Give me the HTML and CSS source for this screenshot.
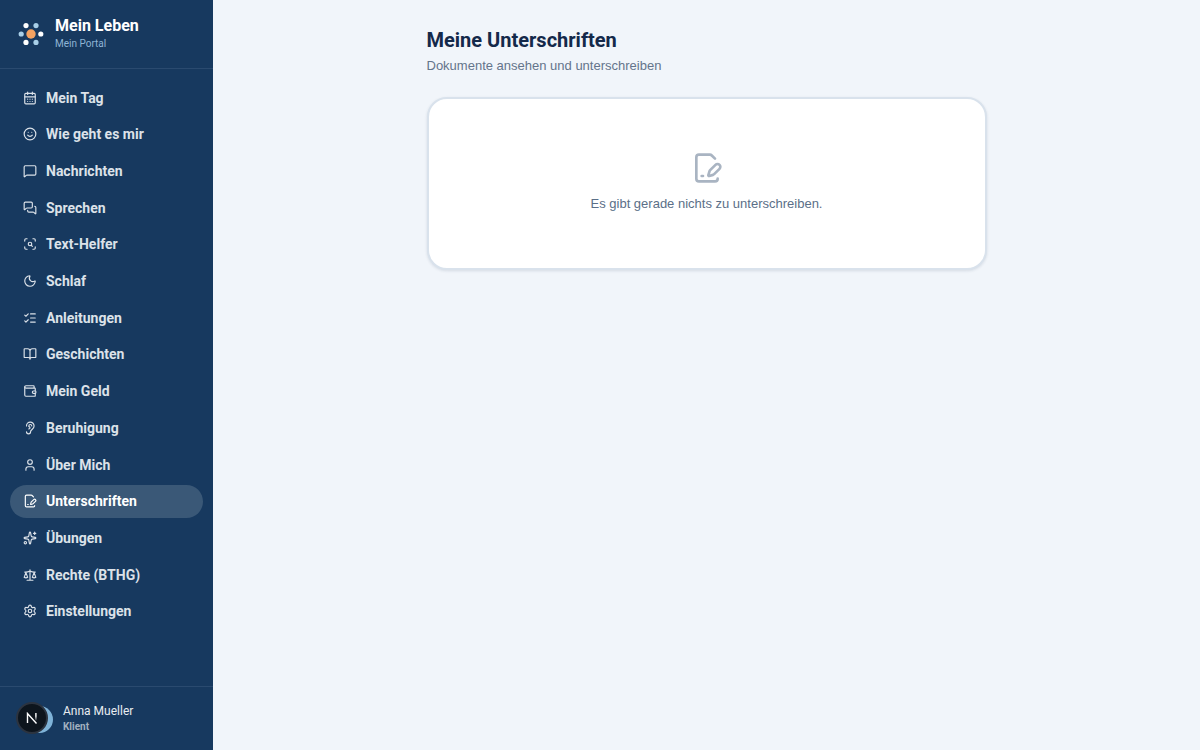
FILE: index.html
```html
<!DOCTYPE html>
<html lang="de">
<head>
<meta charset="utf-8">
<meta name="viewport" content="width=device-width, initial-scale=1">
<title>Meine Unterschriften</title>
<link rel="stylesheet" href="styles.css">
</head>
<body>
<div class="app">
  <aside class="sidebar">
    <header class="brand">
      <svg class="brand-logo" viewBox="0 0 26 26" aria-hidden="true">
        <circle cx="13" cy="13" r="4.7" fill="#f4a261"/>
        <g fill="#ffffff"><circle cx="8" cy="4.6" r="2.6"/><circle cx="22.8" cy="13" r="2.6"/><circle cx="8" cy="21.4" r="2.6"/></g>
        <g fill="#a8cfe8"><circle cx="18" cy="4.6" r="2.6"/><circle cx="3.2" cy="13" r="2.6"/><circle cx="18" cy="21.4" r="2.6"/></g>
      </svg>
      <div>
        <div class="brand-name">Mein Leben</div>
        <div class="brand-sub">Mein Portal</div>
      </div>
    </header>
    <nav class="nav" aria-label="Hauptmenü">
      <a class="nav-link" href="#"><svg class="icon" viewBox="0 0 24 24"><path d="M8 2v4M16 2v4M3 10h18M8 14h.01M12 14h.01M16 14h.01M8 18h.01M12 18h.01M16 18h.01"/><rect x="3" y="4" width="18" height="18" rx="2"/></svg>Mein Tag</a>
      <a class="nav-link" href="#"><svg class="icon" viewBox="0 0 24 24"><circle cx="12" cy="12" r="10"/><path d="M8 14s1.5 2 4 2 4-2 4-2M9 9h.01M15 9h.01"/></svg>Wie geht es mir</a>
      <a class="nav-link" href="#"><svg class="icon" viewBox="0 0 24 24"><path d="M22 17a2 2 0 0 1-2 2H6.828a2 2 0 0 0-1.414.586l-2.202 2.202A.71.71 0 0 1 2 21.286V5a2 2 0 0 1 2-2h16a2 2 0 0 1 2 2z"/></svg>Nachrichten</a>
      <a class="nav-link" href="#"><svg class="icon" viewBox="0 0 24 24"><path d="M16 10a2 2 0 0 1-2 2H6.828a2 2 0 0 0-1.414.586l-2.202 2.202A.71.71 0 0 1 2 14.286V4a2 2 0 0 1 2-2h10a2 2 0 0 1 2 2z"/><path d="M20 9a2 2 0 0 1 2 2v10.286a.71.71 0 0 1-1.212.502l-2.202-2.202A2 2 0 0 0 17.172 19H10a2 2 0 0 1-2-2v-1"/></svg>Sprechen</a>
      <a class="nav-link" href="#"><svg class="icon" viewBox="0 0 24 24"><path d="M3 7V5a2 2 0 0 1 2-2h2M17 3h2a2 2 0 0 1 2 2v2M21 17v2a2 2 0 0 1-2 2h-2M7 21H5a2 2 0 0 1-2-2v-2M16 16l-1.9-1.9"/><circle cx="12" cy="12" r="3"/></svg>Text-Helfer</a>
      <a class="nav-link" href="#"><svg class="icon" viewBox="0 0 24 24"><path d="M20.985 12.486a9 9 0 1 1-9.473-9.472c.405-.022.617.46.402.803a6 6 0 0 0 8.268 8.268c.344-.215.825-.004.803.401"/></svg>Schlaf</a>
      <a class="nav-link" href="#"><svg class="icon" viewBox="0 0 24 24"><path d="M13 5h8M13 12h8M13 19h8M3 17l2 2 4-4M3 7l2 2 4-4"/></svg>Anleitungen</a>
      <a class="nav-link" href="#"><svg class="icon" viewBox="0 0 24 24"><path d="M12 7v14M3 18a1 1 0 0 1-1-1V4a1 1 0 0 1 1-1h5a4 4 0 0 1 4 4 4 4 0 0 1 4-4h5a1 1 0 0 1 1 1v13a1 1 0 0 1-1 1h-6a3 3 0 0 0-3 3 3 3 0 0 0-3-3z"/></svg>Geschichten</a>
      <a class="nav-link" href="#"><svg class="icon" viewBox="0 0 24 24"><path d="M19 7V4a1 1 0 0 0-1-1H5a2 2 0 0 0 0 4h15a1 1 0 0 1 1 1v4h-3a2 2 0 0 0 0 4h3a1 1 0 0 0 1-1v-2a1 1 0 0 0-1-1"/><path d="M3 5v14a2 2 0 0 0 2 2h15a1 1 0 0 0 1-1v-4"/></svg>Mein Geld</a>
      <a class="nav-link" href="#"><svg class="icon" viewBox="0 0 24 24"><path d="M6 8.500a6.500 6.500 0 1 1 13 0c0 6-6 6-6 10a3.500 3.500 0 1 1-7 0"/><path d="M15 8.500a2.500 2.500 0 0 0-5 0v1a2 2 0 1 1 0 4"/></svg>Beruhigung</a>
      <a class="nav-link" href="#"><svg class="icon" viewBox="0 0 24 24"><path d="M19 21v-2a4 4 0 0 0-4-4H9a4 4 0 0 0-4 4v2"/><circle cx="12" cy="7" r="4"/></svg>Über Mich</a>
      <a class="nav-link nav-link-active" href="#" aria-current="page"><svg class="icon" viewBox="0 0 24 24"><path d="m18 5-2.414-2.414A2 2 0 0 0 14.172 2H6a2 2 0 0 0-2 2v16a2 2 0 0 0 2 2h12a2 2 0 0 0 2-2"/><path d="M21.378 12.626a1 1 0 0 0-3.004-3.004l-4.010 4.012a2 2 0 0 0-.506.854l-.837 2.870a.5.5 0 0 0 .620.620l2.870-.837a2 2 0 0 0 .854-.506zM8 18h1"/></svg>Unterschriften</a>
      <a class="nav-link" href="#"><svg class="icon" viewBox="0 0 24 24"><path d="M11.017 2.814a1 1 0 0 1 1.966 0l1.051 5.558a2 2 0 0 0 1.594 1.594l5.558 1.051a1 1 0 0 1 0 1.966l-5.558 1.051a2 2 0 0 0-1.594 1.594l-1.051 5.558a1 1 0 0 1-1.966 0l-1.051-5.558a2 2 0 0 0-1.594-1.594l-5.558-1.051a1 1 0 0 1 0-1.966l5.558-1.051a2 2 0 0 0 1.594-1.594zM20 2v4M22 4h-4"/><circle cx="4" cy="20" r="2"/></svg>Übungen</a>
      <a class="nav-link" href="#"><svg class="icon" viewBox="0 0 24 24"><path d="m16 16 3-8 3 8c-.87.65-1.92 1-3 1s-2.130-.35-3-1ZM2 16l3-8 3 8c-.87.65-1.92 1-3 1s-2.130-.35-3-1ZM7 21h10M12 3v18M3 7h2c2 0 5-1 7-2 2 1 5 2 7 2h2"/></svg>Rechte (BTHG)</a>
      <a class="nav-link" href="#"><svg class="icon" viewBox="0 0 24 24"><path d="M9.671 4.136a2.340 2.340 0 0 1 4.659 0 2.340 2.340 0 0 0 3.319 1.915 2.340 2.340 0 0 1 2.330 4.033 2.340 2.340 0 0 0 0 3.831 2.340 2.340 0 0 1-2.330 4.033 2.340 2.340 0 0 0-3.319 1.915 2.340 2.340 0 0 1-4.659 0 2.340 2.340 0 0 0-3.320-1.915 2.340 2.340 0 0 1-2.330-4.033 2.340 2.340 0 0 0 0-3.831A2.340 2.340 0 0 1 6.350 6.051a2.340 2.340 0 0 0 3.319-1.915"/><circle cx="12" cy="12" r="3"/></svg>Einstellungen</a>
    </nav>
    <footer class="account">
      <span class="avatar"></span>
      <div>
        <div class="account-name">Anna Mueller</div>
        <div class="account-role">Klient</div>
      </div>
    </footer>
  </aside>
  <main class="main">
    <div class="content">
      <h1 class="title">Meine Unterschriften</h1>
      <p class="subtitle">Dokumente ansehen und unterschreiben</p>
      <section class="card">
        <svg class="icon card-icon" viewBox="0 0 24 24"><path d="m18 5-2.414-2.414A2 2 0 0 0 14.172 2H6a2 2 0 0 0-2 2v16a2 2 0 0 0 2 2h12a2 2 0 0 0 2-2"/><path d="M21.378 12.626a1 1 0 0 0-3.004-3.004l-4.010 4.012a2 2 0 0 0-.506.854l-.837 2.870a.5.5 0 0 0 .620.620l2.870-.837a2 2 0 0 0 .854-.506zM8 18h1"/></svg>
        <p class="card-text">Es gibt gerade nichts zu unterschreiben.</p>
      </section>
    </div>
  </main>
</div>
<button class="dev-badge" type="button" aria-label="Entwicklerwerkzeuge">
  <svg class="dev-mark" viewBox="0 0 12 12" fill="none" stroke-width="1.400">
    <defs><linearGradient id="fade" gradientUnits="userSpaceOnUse" x1="0" y1="1" x2="0" y2="9"><stop offset="0.400" stop-color="#fff"/><stop offset="1" stop-color="#fff" stop-opacity="0"/></linearGradient></defs>
    <path stroke="#fff" d="M1.500 11V1.500L10.500 11.500"/>
    <path stroke="url(#fade)" d="M9.900 1V9"/>
  </svg>
</button>
</body>
</html>
```
FILE: styles.css
```css
* { box-sizing: border-box; }

body {
  margin: 0;
  font-family: Roboto, "Liberation Sans", sans-serif;
  font-size: 14px;
  line-height: 20px;
  color: #14294a;
  background: #f1f5fa;
}

h1, p { margin: 0; }

.app {
  display: grid;
  grid-template-columns: 213px 1fr;
  min-height: 100vh;
}

.sidebar {
  display: flex;
  flex-direction: column;
  background: #17395f;
  color: #ffffff;
}

.brand {
  display: flex;
  align-items: center;
  gap: 11px;
  padding: 16px 18px;
  border-bottom: 1px solid #2a4a6f;
}

.brand-logo { width: 26px; height: 26px; }

.brand-name {
  font-size: 16px;
  font-weight: 700;
  line-height: 20px;
}

.brand-sub {
  font-size: 10px;
  line-height: 16px;
  color: #8fb5d6;
}

.nav {
  flex: 1;
  display: flex;
  flex-direction: column;
  justify-content: space-between;
  padding: 12px 10px 58px;
}

.nav-link {
  display: flex;
  align-items: center;
  gap: 9px;
  min-height: 33px;
  padding: 0 13px;
  border-radius: 17px;
  font-weight: 700;
  color: #dce2e9;
  text-decoration: none;
}

.nav-link-active {
  background: #3a5877;
  color: #ffffff;
}

.icon {
  width: 14px;
  height: 14px;
  flex: none;
  fill: none;
  stroke: currentColor;
  stroke-width: 2;
  stroke-linecap: round;
  stroke-linejoin: round;
}

.account {
  display: flex;
  align-items: center;
  gap: 10px;
  padding: 16px 26px 15px;
  border-top: 1px solid #2a4a6f;
}

.avatar {
  width: 27px;
  height: 27px;
  border-radius: 50%;
  background: #7fb3d8;
}

.account-name {
  font-size: 12px;
  line-height: 16px;
  color: #e8ecf0;
}

.account-role {
  font-size: 10px;
  font-weight: 700;
  line-height: 16px;
  color: #a2b0bf;
}

.main { padding: 26px 24px; }

.content {
  max-width: 560px;
  margin: 0 auto;
}

.title {
  font-size: 20px;
  font-weight: 700;
  line-height: 28px;
}

.subtitle,
.card-text {
  font-family: "Liberation Sans", Arial, sans-serif;
  font-size: 13px;
}

.subtitle {
  margin-top: 2px;
  color: #64748b;
}

.card {
  display: flex;
  flex-direction: column;
  align-items: center;
  gap: 10px;
  margin-top: 21px;
  padding: 53px 24px 54px;
  border: 2px solid #d9e2ec;
  border-radius: 20px;
  background: #ffffff;
  box-shadow: 0 1px 3px rgba(20, 41, 74, 0.12);
}

.card-icon {
  width: 32px;
  height: 32px;
  color: #a9b4c2;
}

.card-text { color: #5b6f88; }

.dev-badge {
  position: fixed;
  left: 16px;
  bottom: 16px;
  display: grid;
  place-items: center;
  width: 32px;
  height: 32px;
  padding: 0;
  border: 2px solid #2c3440;
  border-radius: 50%;
  background: #0d151d;
}

.dev-mark { width: 12px; height: 12px; }
```
